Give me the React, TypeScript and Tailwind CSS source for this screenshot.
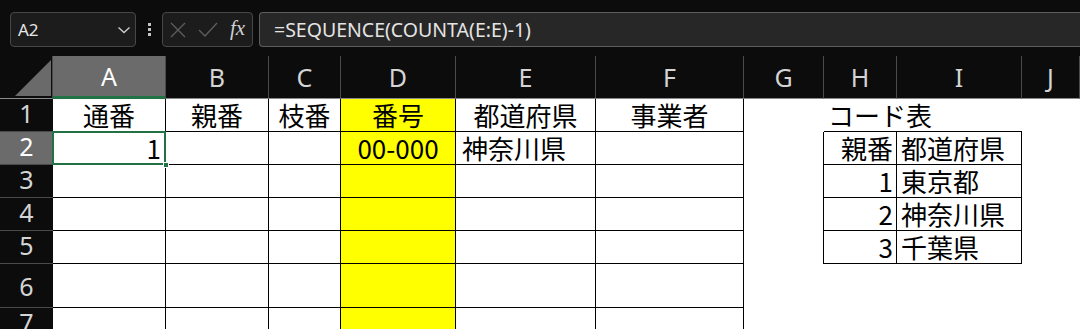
const cols = ["A", "B", "C", "D", "E", "F", "G", "H", "I", "J"];
const rowNums = [1, 2, 3, 4, 5, 6, 7];

const jp = "font-['Yu_Gothic','Noto_Sans_CJK_JP',sans-serif]";

function HeaderCell({ label, active }: { label: string; active?: boolean }) {
    return (
        <div
            className={
                "flex items-center justify-center text-[25px] leading-none font-['Noto_Sans','Noto_Sans_CJK_JP',sans-serif] border-r border-[#4a4a4a] " +
                (active
                    ? "bg-[#6b6b6b] text-white border-b-[3px] border-b-[#217346]"
                    : "text-[#d4d4d4] border-b border-b-[#8a8a8a]")
            }
        >
            {label}
        </div>
    );
}

function RowHead({ n }: { n: number }) {
    return (
        <div
            className={
                "flex justify-center text-[25px] leading-none font-['Noto_Sans',sans-serif] border-b border-[#4a4a4a] " +
                (n === 6 ? "pt-[10px] " : "pt-[2px] ") +
                (n === 2 ? "bg-[#6b6b6b] text-white" : "text-[#d4d4d4]")
            }
        >
            {n}
        </div>
    );
}

function Cell({
    text,
    align = "center",
    yellow,
    bottom = true,
}: {
    text?: string;
    align?: "center" | "left" | "right";
    yellow?: boolean;
    bottom?: boolean;
}) {
    const j = align === "center" ? "justify-center" : align === "left" ? "justify-start pl-[6px]" : "justify-end pr-[4px]";
    return (
        <div
            className={
                `flex items-center ${j} ${jp} text-[26px] leading-none text-black border-r border-black ` +
                (bottom ? "border-b " : "") +
                (yellow ? "bg-[#ffff00]" : "bg-white")
            }
        >
            {text}
        </div>
    );
}

function Plain({ className = "", children }: { className?: string; children?: React.ReactNode }) {
    return <div className={`bg-white flex items-center ${jp} text-[26px] leading-none text-black ${className}`}>{children}</div>;
}

export default function App() {
    const code = [
        ["親番", "都道府県"],
        ["1", "東京都"],
        ["2", "神奈川県"],
        ["3", "千葉県"],
    ];
    return (
        <div className="w-[1080px] h-[329px] overflow-hidden bg-[#0c0c0c]">
            {/* formula bar */}
            <div className="flex h-[56px] pt-[12px] pl-[10px]">
                <div className="flex items-center justify-between w-[126px] h-[35px] rounded-[4px] bg-[#1c1c1c] border border-[#474747] pl-[7px] pr-[4px]">
                    <span className="text-[17px] text-[#e6e6e6] font-['Noto_Sans',sans-serif]">A2</span>
                    <svg width="14" height="8" viewBox="0 0 14 8">
                        <path d="M1.5 1.5 L7 6.5 L12.5 1.5" fill="none" stroke="#cfcfcf" strokeWidth="1.3" />
                    </svg>
                </div>
                <div className="flex flex-col justify-center gap-[2px] w-[26px] h-[35px] items-center">
                    <div className="w-[3px] h-[3px] bg-[#c4c4c4]" />
                    <div className="w-[3px] h-[3px] bg-[#c4c4c4]" />
                    <div className="w-[3px] h-[3px] bg-[#c4c4c4]" />
                </div>
                <div className="flex items-center w-[91px] h-[35px] rounded-[4px] bg-[#1c1c1c] border border-[#474747] pl-[7px] gap-[12px]">
                    <svg width="16" height="16" viewBox="0 0 16 16">
                        <path d="M1 1 L15 15 M15 1 L1 15" stroke="#5e5e5e" strokeWidth="1.3" />
                    </svg>
                    <svg width="20" height="15" viewBox="0 0 20 15">
                        <path d="M1 8 L7 14 L19 1" fill="none" stroke="#5e5e5e" strokeWidth="1.3" />
                    </svg>
                    <span className="text-[21px] italic font-['Liberation_Serif',serif] text-[#d0d0d0] leading-none -mt-[2px]">fx</span>
                </div>
                <div className="flex items-center flex-1 h-[35px] ml-[6px] rounded-l-[4px] bg-[#272727] border border-r-0 border-[#5e5e5e] pl-[14px]">
                    <span className="text-[19.5px] text-[#e4e4e4] font-['Noto_Sans',sans-serif]">=SEQUENCE(COUNTA(E:E)-1)</span>
                </div>
            </div>

            {/* sheet */}
            <div className="grid grid-cols-[53px_113px_103px_72px_115px_140px_148px_80px_73px_125px_1fr] grid-rows-[43px_33px_33px_33px_33px_33px_44px_40px]">
                <div className="relative border-b border-[#8a8a8a] border-r border-r-[#4a4a4a]">
                    <svg className="absolute left-[15px] top-[4px]" width="36" height="36" viewBox="0 0 36 36">
                        <path d="M36 0 L36 36 L0 36 Z" fill="#6a6a6a" />
                    </svg>
                </div>
                {cols.map((c) => (
                    <HeaderCell key={c} label={c} active={c === "A"} />
                ))}

                {rowNums.map((n) => {
                    const last = n === 7;
                    const r = n - 2;
                    const inTable = n >= 2 && n <= 5;
                    return [
                        <RowHead key={`h${n}`} n={n} />,
                        n === 2 ? (
                            <div key={`a${n}`} className={`relative flex items-center justify-end pr-[4px] bg-white border-r border-b border-black ${jp} text-[26px] leading-none`}>
                                1
                                <div className="absolute -left-[1px] -top-[1px] -right-[1px] -bottom-[1px] border-2 border-[#217346]" />
                                <div className="absolute -right-[4px] -bottom-[4px] w-[6px] h-[6px] bg-[#217346] border border-white" />
                            </div>
                        ) : (
                            <Cell key={`a${n}`} text={n === 1 ? "通番" : undefined} bottom={!last} />
                        ),
                        <Cell key={`b${n}`} text={n === 1 ? "親番" : undefined} bottom={!last} />,
                        <Cell key={`c${n}`} text={n === 1 ? "枝番" : undefined} bottom={!last} />,
                        <Cell key={`d${n}`} yellow text={n === 1 ? "番号" : n === 2 ? "00-000" : undefined} bottom={!last} />,
                        <Cell key={`e${n}`} align={n === 2 ? "left" : "center"} text={n === 1 ? "都道府県" : n === 2 ? "神奈川県" : undefined} bottom={!last} />,
                        <Cell key={`f${n}`} text={n === 1 ? "事業者" : undefined} bottom={!last} />,
                        <Plain key={`g${n}`} className={inTable ? "border-r border-black" : ""} />,
                        n === 1 ? (
                            <Plain key={`h1c`} className="border-b border-black relative">
                                <span className="absolute left-[4px] whitespace-nowrap">コード表</span>
                            </Plain>
                        ) : inTable ? (
                            <Plain key={`hc${n}`} className="justify-end pr-[3px] border-r border-b border-black">
                                {code[r][0]}
                            </Plain>
                        ) : (
                            <Plain key={`hc${n}`} />
                        ),
                        n === 1 ? (
                            <Plain key={`i1`} className="border-b border-black" />
                        ) : inTable ? (
                            <Plain key={`ic${n}`} className="pl-[4px] border-r border-b border-black">
                                {code[r][1]}
                            </Plain>
                        ) : (
                            <Plain key={`ic${n}`} />
                        ),
                        <Plain key={`j${n}`} />,
                    ];
                })}
            </div>
        </div>
    );
}
